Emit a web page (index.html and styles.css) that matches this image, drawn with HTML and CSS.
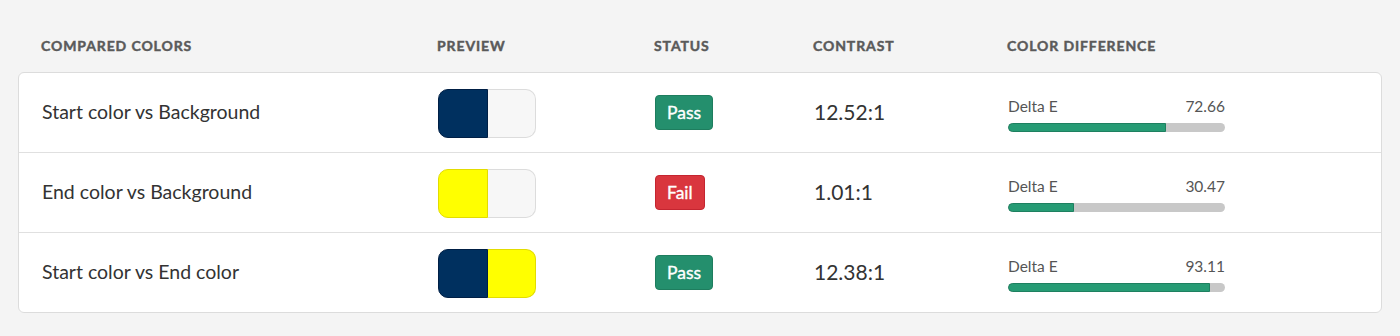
FILE: index.html
```html
<!DOCTYPE html>
<html>
<head>
<meta charset="utf-8">
<link rel="stylesheet" href="styles.css">
</head>
<body>
<div class="wrap">
  <div class="head">
    <div>Compared colors</div>
    <div>Preview</div>
    <div>Status</div>
    <div>Contrast</div>
    <div>Color difference</div>
  </div>
  <div class="card">
    <div class="row">
      <div class="name">Start color vs Background</div>
      <div class="swatch"><span class="sw-l navy"></span><span class="sw-r light"></span></div>
      <div><span class="badge pass">Pass</span></div>
      <div class="ratio">12.52:1</div>
      <div class="diff">
        <div class="diff-top"><span>Delta E</span><span>72.66</span></div>
        <div class="bar"><div class="fill" style="width:72.66%"></div></div>
      </div>
    </div>
    <div class="row">
      <div class="name">End color vs Background</div>
      <div class="swatch"><span class="sw-l yellow"></span><span class="sw-r light"></span></div>
      <div><span class="badge fail">Fail</span></div>
      <div class="ratio">1.01:1</div>
      <div class="diff">
        <div class="diff-top"><span>Delta E</span><span>30.47</span></div>
        <div class="bar"><div class="fill" style="width:30.47%"></div></div>
      </div>
    </div>
    <div class="row">
      <div class="name">Start color vs End color</div>
      <div class="swatch"><span class="sw-l navy"></span><span class="sw-r yellow"></span></div>
      <div><span class="badge pass">Pass</span></div>
      <div class="ratio">12.38:1</div>
      <div class="diff">
        <div class="diff-top"><span>Delta E</span><span>93.11</span></div>
        <div class="bar"><div class="fill" style="width:93.11%"></div></div>
      </div>
    </div>
  </div>
</div>
</body>
</html>
```
FILE: styles.css
```css
html, body {
  margin: 0;
  padding: 0;
  background: #f4f4f4;
  font-family: Lato, "Open Sans", sans-serif;
  color: #333;
}
.wrap {
  padding: 0 18px;
}
.head, .row {
  display: grid;
  grid-template-columns: 396px 217px 159px 194px 1fr;
  padding-left: 23px;
  align-items: center;
}
.head {
  padding-top: 37px;
  padding-bottom: 17px;
  font-size: 14px;
  line-height: 18px;
  font-weight: 700;
  text-transform: uppercase;
  letter-spacing: 0.9px;
  color: #5a5a5a;
  -webkit-text-stroke: 0.45px #5a5a5a;
}
.card {
  background: #fff;
  border: 1px solid #dcdcdc;
  border-radius: 6px;
}
.row {
  height: 79px;
}
.row + .row {
  border-top: 1px solid #e0e0e0;
}
.name {
  font-size: 19.5px;
  color: #333;
  padding-bottom: 3px;
}
.swatch {
  display: flex;
  width: 98px;
  height: 49px;
  margin-top: 1px;
}
.sw-l, .sw-r {
  flex: 1;
  box-sizing: border-box;
}
.sw-l {
  border-radius: 10px 0 0 10px;
}
.sw-r {
  border-radius: 0 10px 10px 0;
}
.navy {
  background: #00305f;
  border: 1px solid #001f45;
}
.light {
  background: #f7f7f7;
  border: 1px solid #dcdcdc;
  border-left: 0;
}
.yellow {
  background: #ffff00;
  border: 1px solid #e2dc00;
}
.sw-r.yellow { border-left: 0; }
.badge {
  display: inline-block;
  height: 35px;
  line-height: 33px;
  box-sizing: border-box;
  padding: 0 11px;
  border-radius: 4px;
  color: #fff;
  font-size: 17.5px;
  font-weight: 400;
  -webkit-text-stroke: 0.35px #fff;
}
.pass {
  background: #248f6d;
  border: 1px solid #1e7d5e;
}
.fail {
  background: #d9363e;
  border: 1px solid #c42530;
}
.ratio {
  font-size: 21px;
  color: #333;
  padding-bottom: 2px;
}
.diff {
  width: 217px;
  padding-top: 2px;
}
.diff-top {
  display: flex;
  justify-content: space-between;
  font-size: 15.5px;
  line-height: 20px;
  color: #555;
}
.bar {
  margin-top: 7px;
  height: 9px;
  border-radius: 5px;
  background: #c8c8c8;
  overflow: hidden;
}
.fill {
  height: 100%;
  box-sizing: border-box;
  background: #269b74;
  border: 1px solid #1e8060;
  border-radius: 5px 0 0 5px;
}
```
